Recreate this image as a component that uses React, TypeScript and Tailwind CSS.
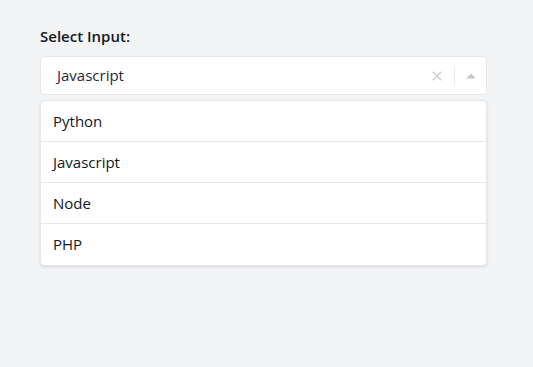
import { X } from 'lucide-react';

const options = ['Python', 'Javascript', 'Node', 'PHP'];

export default function App() {
  return (
    <div
      className="min-h-screen w-full bg-[#f3f4f6] px-10 pt-[26px]"
      style={{ fontFamily: '"Open Sans", "Noto Sans", sans-serif' }}
    >
      <div className="w-[447px]">
        <label className="block text-[15px] font-semibold leading-5 text-[#111827] mb-[10px]">
          Select Input:
        </label>

        {/* Select control */}
        <div className="flex h-[39px] items-center rounded border border-[#e5e7eb] bg-white pl-4 pr-[10px]">
          <span className="flex-1 text-[15px] text-[#1f2a44]">Javascript</span>
          <X className="h-4 w-4 text-[#c4c8cf]" strokeWidth={1.7} />
          <div className="ml-[9px] mr-[11px] h-[18px] w-px bg-[#e5e7eb]" />
          <svg width="10" height="6" viewBox="0 0 10 6">
            <path d="M0 5.5 L5 0.5 L10 5.5 Z" fill="#c4c8cf" />
          </svg>
        </div>

        {/* Options */}
        <ul className="mt-[5px] rounded border border-[#e5e7eb] bg-white shadow-[0_1px_3px_rgba(0,0,0,0.12)]">
          {options.map((opt, i) => (
            <li
              key={opt}
              className={`flex h-[41px] items-center px-3 text-[15px] text-[#111827] ${
                i < options.length - 1 ? 'border-b border-[#e5e7eb]' : ''
              }`}
            >
              {opt}
            </li>
          ))}
        </ul>
      </div>
    </div>
  );
}
